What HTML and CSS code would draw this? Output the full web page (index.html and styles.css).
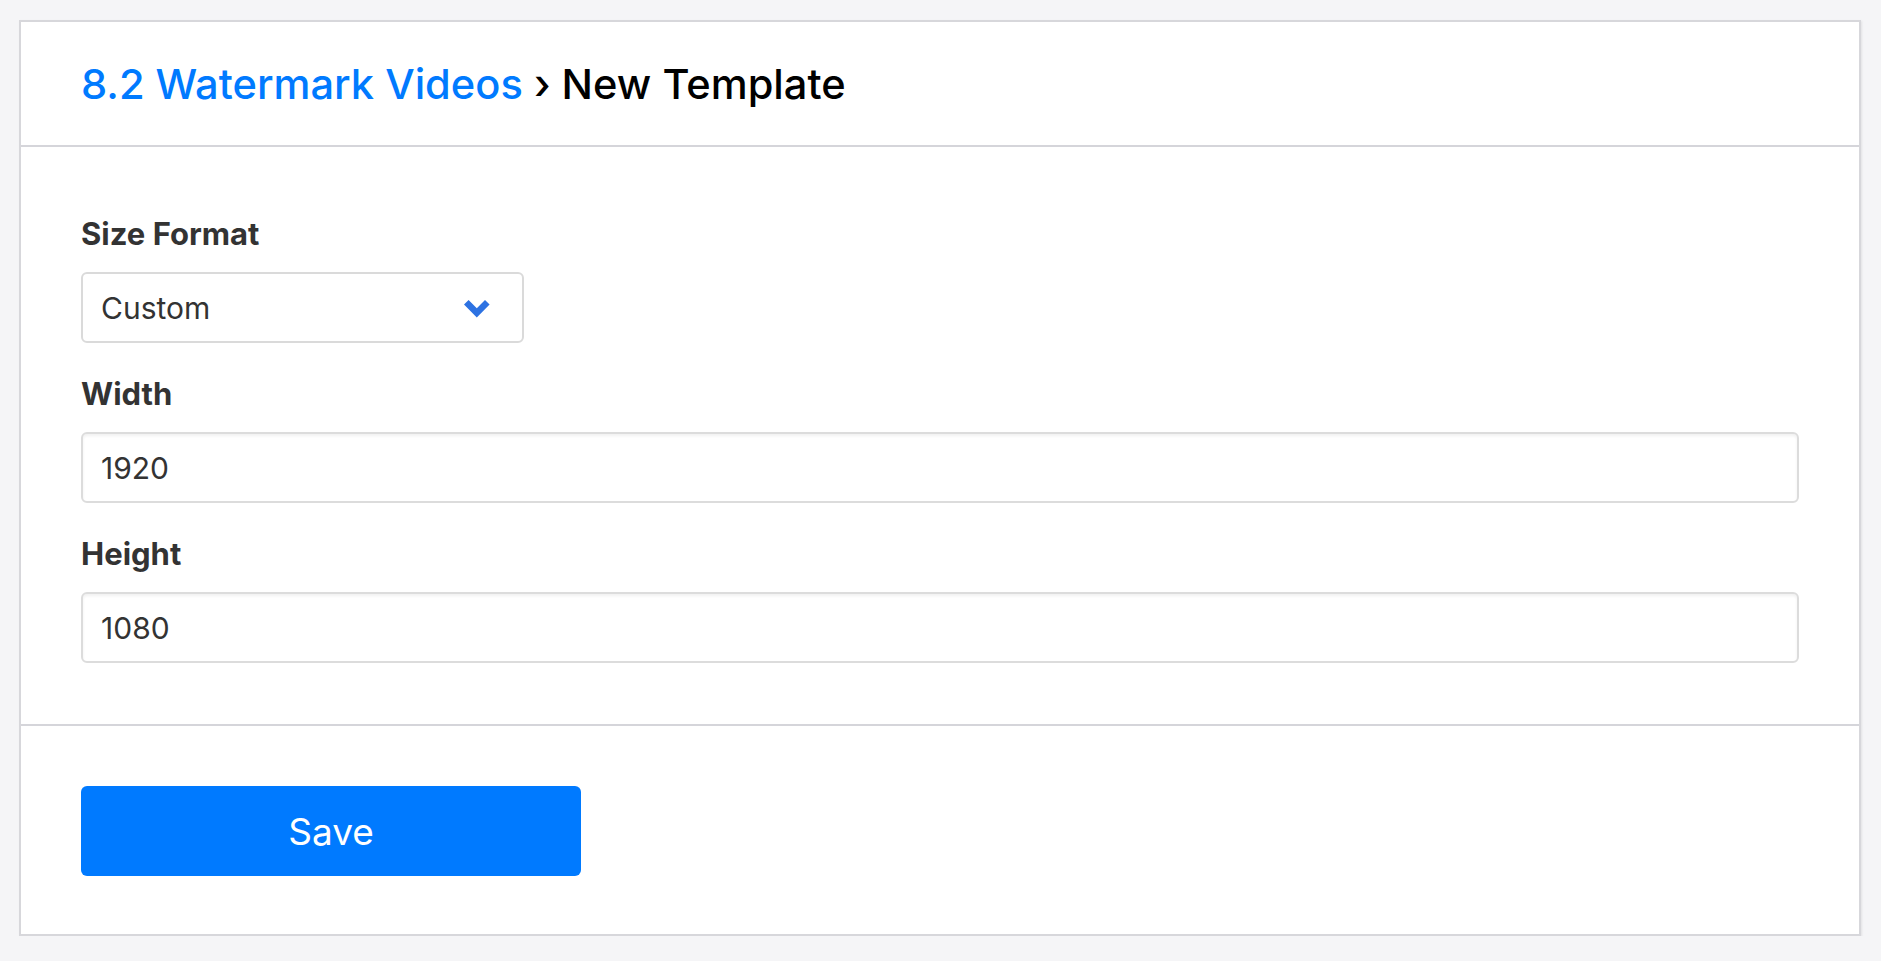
FILE: index.html
```html
<!DOCTYPE html>
<html lang="en">
<head>
<meta charset="utf-8">
<title>New Template</title>
<link rel="stylesheet" href="styles.css">
</head>
<body>
<div class="card">
  <div class="card-header">
    <h1 class="title"><a class="crumb" href="#">8.2 Watermark Videos</a> › New Template</h1>
  </div>
  <div class="card-body">
    <div class="group">
      <label class="label">Size Format</label>
      <div class="select">
        <span class="select-value">Custom</span>
        <svg class="chevron" width="26" height="18" viewBox="0 0 26 18"><polygon points="4.6,0 0,4.6 12.8,17.6 25.6,4.6 21,0 12.8,8.3" fill="#2d72e2"/></svg>
      </div>
    </div>
    <div class="group">
      <label class="label">Width</label>
      <div class="input">1920</div>
    </div>
    <div class="group">
      <label class="label">Height</label>
      <div class="input">1080</div>
    </div>
  </div>
  <div class="card-footer">
    <button class="btn">Save</button>
  </div>
</div>
</body>
</html>
```
FILE: styles.css
```css
html, body {
  margin: 0;
  padding: 0;
  background: #f5f5f7;
}
body {
  padding: 20px 20px 0 19px;
  font-family: Inter, "Noto Sans", "Liberation Sans", sans-serif;
  color: #333;
}
.card {
  background: #fff;
  border: 2px solid #d7d7db;
  box-shadow: 1px 1px 2px rgba(0, 0, 0, 0.08);
}
.card-header {
  padding: 37px 60px 36px;
  border-bottom: 2px solid #d5d5da;
}
.title {
  margin: 0;
  font-size: 41.6px;
  line-height: 50px;
  font-weight: 500;
  color: #000;
}
.crumb {
  color: #007aff;
  text-decoration: none;
}
.card-body {
  padding: 64px 60px 61px;
  border-bottom: 2px solid #d5d5da;
  display: flex;
  flex-direction: column;
  gap: 28px;
}
.group {
  display: flex;
  flex-direction: column;
  gap: 16px;
}
.label {
  font-size: 31px;
  line-height: 45px;
  font-weight: 700;
  color: #333;
}
.select {
  width: 443px;
  height: 71px;
  box-sizing: border-box;
  border: 2px solid #dadada;
  border-radius: 6px;
  display: flex;
  align-items: center;
  justify-content: space-between;
  padding: 0 32px 0 18px;
}
.select-value, .input {
  font-size: 30px;
  color: #333;
}
.chevron {
  display: block;
  margin-top: 2px;
}
.input {
  height: 71px;
  box-sizing: border-box;
  border: 2px solid #dcdcdc;
  border-radius: 6px;
  box-shadow: inset 0 2px 3px rgba(0, 0, 0, 0.06);
  display: flex;
  align-items: center;
  padding: 0 18px;
}
.card-footer {
  padding: 60px 60px 58px;
}
.btn {
  display: block;
  width: 500px;
  height: 90px;
  border: 0;
  border-radius: 6px;
  background: #007aff;
  color: #fff;
  font-family: Inter, "Noto Sans", "Liberation Sans", sans-serif;
  font-size: 37px;
  font-weight: 400;
}
```
